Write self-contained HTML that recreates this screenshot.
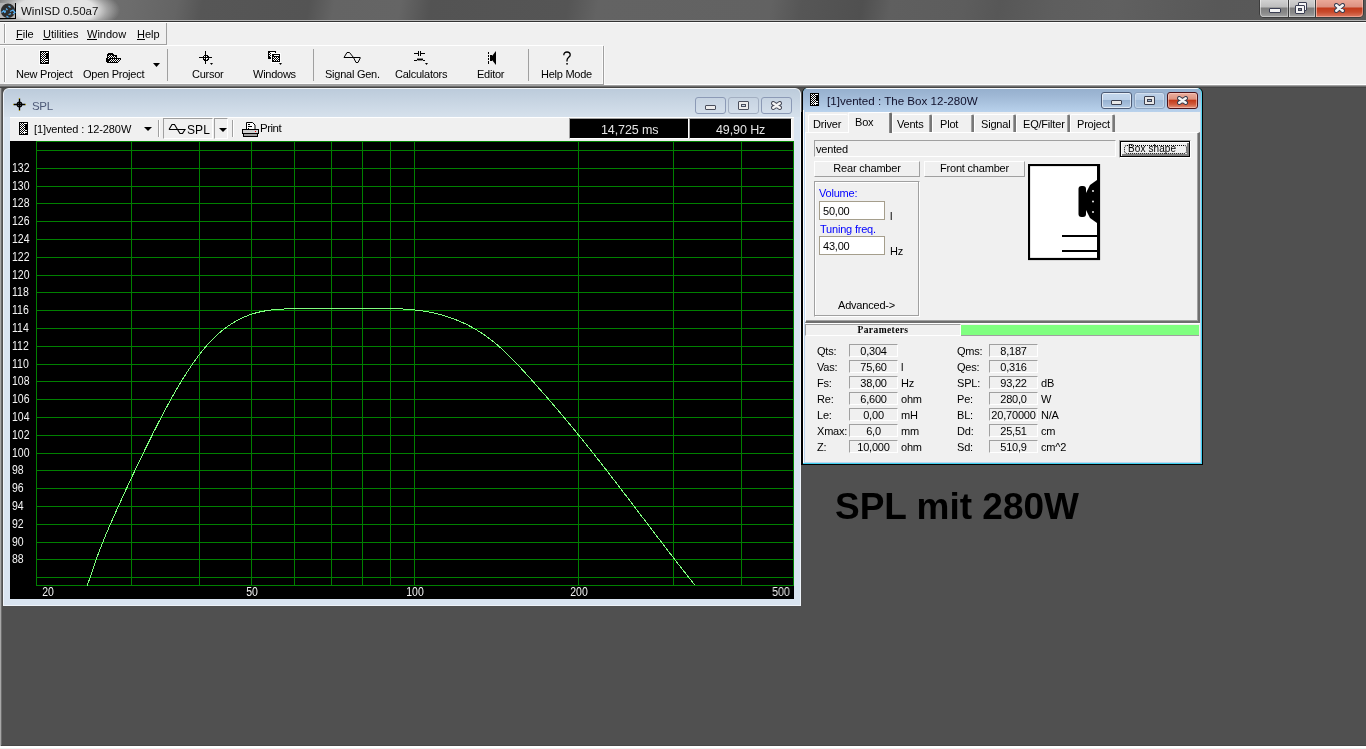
<!DOCTYPE html>
<html><head><meta charset="utf-8">
<style>
*{margin:0;padding:0;box-sizing:border-box}
html,body{width:1366px;height:749px;overflow:hidden;background:#505050;-webkit-font-smoothing:antialiased;font-family:"Liberation Sans",sans-serif;font-size:11px;color:#000}
.a{position:absolute}
.t{position:absolute;line-height:12px;white-space:nowrap}
.lab{font-size:12.5px;color:#f4f4f4;transform:scaleX(0.84);transform-origin:0 0}
.labc{transform-origin:30px 0}
.tab{top:114px;height:18px;border-top:1px solid #fff;border-left:1px solid #fff;border-right:2px solid #787878;box-shadow:inset -1px 0 0 #a0a0a0;border-radius:2px 2px 0 0}
.tt{font-size:11px;letter-spacing:-0.2px}
.btn{border:1px solid #fff;border-right-color:#a0a0a0;border-bottom-color:#a0a0a0}
.pbox{width:49px;height:13px;border:1px solid #a0a0a0;border-right-color:#fff;border-bottom-color:#fff}
u{text-decoration:none;border-bottom:1px solid #000;display:inline-block;line-height:10px}
</style></head><body><div style="position:absolute;left:0;top:0;width:1366px;height:749px;will-change:transform">

<!-- ===== main title bar ===== -->
<div class="a" id="title" style="left:0;top:0;width:1366px;height:20px;background:linear-gradient(100deg,#7a7a7a 0,#6c6c6c 130px,#646464 175px,#565656 200px,#545454 305px,#646464 330px,#656565 395px,#535353 425px,#555 560px,#636363 590px,#626262 760px,#565656 790px,#505050 850px,#5f5f5f 878px,#5d5d5d 950px,#575757 985px,#5e5e5e 1040px,#606060 1100px,#585858 1200px,#5a5a5a 1366px)"></div>
<div class="a" style="left:0;top:0;width:200px;height:20px;background:radial-gradient(ellipse 64px 24px at 56px 10px,rgba(236,236,236,1) 0,rgba(226,226,226,1) 62%,rgba(200,200,200,0.6) 80%,rgba(150,150,150,0) 100%)"></div>
<svg class="a" style="left:0;top:3px" width="17" height="16" viewBox="0 0 17 16">
<rect width="16" height="15.5" fill="#b4b4b4"/><rect x="15" y="0" width="1" height="16" fill="#000"/><rect x="0" y="15" width="16" height="1" fill="#000"/>
<circle cx="8" cy="7.8" r="7.2" fill="#2e2e2e"/>
<path d="M1.5 9.5l2-1.5M3.5 7l1.5 3M6 5.5l1.5 1.5M8.5 3l2 1.5 M10 8.5l3-1.5 2 2.5-2 1.5M8.5 11.5l2.5-.8M6.5 13l2 1.5M5 9.5l.5-2" stroke="#5ab0f0" stroke-width="1.3" fill="none"/>
</svg>
<div class="t" style="left:21px;top:5px;font-size:11.5px;color:#101010">WinISD 0.50a7</div>
<div class="a" style="left:0;top:20px;width:1366px;height:1px;background:#b8b8b8"></div>
<div class="a" style="left:0;top:21px;width:1366px;height:1px;background:#333"></div>
<div class="a" style="left:0;top:22px;width:1366px;height:1px;background:#fff"></div>

<!-- caption buttons -->
<div class="a" style="left:1259px;top:-3px;width:105px;height:21px;border:1px solid #3c3c3c;border-radius:0 0 5px 5px;background:#3c3c3c"></div>
<div class="a" style="left:1260px;top:0;width:28px;height:17px;border-radius:0 0 0 4px;background:linear-gradient(#d2d2d2 0,#bdbdbd 7px,#7e7e7e 8px,#8a8a8a 13px,#a4a4a4 17px);box-shadow:inset 1px 0 0 rgba(255,255,255,.5),inset -1px -1px 0 rgba(255,255,255,.35)"></div>
<div class="a" style="left:1289px;top:0;width:26px;height:17px;background:linear-gradient(#d2d2d2 0,#bdbdbd 7px,#7e7e7e 8px,#8a8a8a 13px,#a4a4a4 17px);box-shadow:inset 1px 0 0 rgba(255,255,255,.5),inset -1px -1px 0 rgba(255,255,255,.35)"></div>
<div class="a" style="left:1316px;top:0;width:47px;height:17px;border-radius:0 0 4px 0;background:linear-gradient(#eaa898 0,#dc9080 7px,#c23a1c 8px,#c84a2c 12px,#dc7a62 17px);box-shadow:inset 1px 0 0 rgba(255,220,210,.6),inset -1px -1px 0 rgba(255,200,190,.5)"></div>
<div class="a" style="left:1269px;top:8px;width:12px;height:5px;background:#f4f4f4;border:1px solid #3a3e52;border-radius:1px"></div>
<div class="a" style="left:1298px;top:2px;width:9px;height:9px;background:#f4f4f4;border:1px solid #3a3e52;border-radius:1px"></div>
<div class="a" style="left:1295px;top:5px;width:10px;height:9px;background:#f4f4f4;border:1px solid #3a3e52;border-radius:1px"></div>
<div class="a" style="left:1298px;top:8px;width:4px;height:3px;background:#8a8a8a;border:1px solid #3a3e52"></div>
<svg class="a" style="left:1334px;top:3px" width="11" height="10" viewBox="0 0 11 10"><path d="M2.3 2.3L8.7 7.7M8.7 2.3L2.3 7.7" stroke="#3a3e52" stroke-width="4.6" stroke-linecap="round"/><path d="M2.3 2.3L8.7 7.7M8.7 2.3L2.3 7.7" stroke="#f4f4f4" stroke-width="2.6" stroke-linecap="round"/></svg>

<!-- ===== rebar ===== -->
<div class="a" style="left:0;top:23px;width:1366px;height:61px;background:#f0f0f0"></div>
<!-- menu band -->
<div class="a" style="left:0;top:23px;width:167px;height:22px;border-right:1px solid #a0a0a0;border-bottom:1px solid #a0a0a0"></div>
<div class="a" style="left:0;top:45px;width:603px;height:1px;background:#fff"></div>
<div class="a" style="left:4px;top:24px;width:2px;height:19px;border-left:1px solid #a0a0a0;border-right:1px solid #fff"></div>
<div class="t" style="left:16px;top:28px"><u>F</u>ile</div>
<div class="t" style="left:43px;top:28px"><u>U</u>tilities</div>
<div class="t" style="left:87px;top:28px"><u>W</u>indow</div>
<div class="t" style="left:137px;top:28px"><u>H</u>elp</div>

<!-- toolbar band -->
<div class="a" style="left:603px;top:46px;width:1px;height:38px;background:#a0a0a0"></div>
<div class="a" style="left:4px;top:48px;width:2px;height:34px;border-left:1px solid #a0a0a0;border-right:1px solid #fff"></div>
<div class="a" style="left:167px;top:49px;width:1px;height:32px;background:#a0a0a0"></div>
<div class="a" style="left:313px;top:49px;width:1px;height:32px;background:#a0a0a0"></div>
<div class="a" style="left:528px;top:49px;width:1px;height:32px;background:#a0a0a0"></div>

<div class="t" style="left:16px;top:68px;letter-spacing:-0.25px">New Project</div>
<div class="t" style="left:83px;top:68px;letter-spacing:-0.25px">Open Project</div>
<div class="t" style="left:192px;top:68px;letter-spacing:-0.25px">Cursor</div>
<div class="t" style="left:253px;top:68px;letter-spacing:-0.25px">Windows</div>
<div class="t" style="left:325px;top:68px;letter-spacing:-0.25px">Signal Gen.</div>
<div class="t" style="left:395px;top:68px;letter-spacing:-0.25px">Calculators</div>
<div class="t" style="left:477px;top:68px;letter-spacing:-0.25px">Editor</div>
<div class="t" style="left:541px;top:68px;letter-spacing:-0.25px">Help Mode</div>

<!-- toolbar icons -->
<svg class="a" style="left:0;top:46px" width="604" height="22" viewBox="0 46 604 22" shape-rendering="crispEdges">
<defs><pattern id="dith" width="2" height="2" patternUnits="userSpaceOnUse"><rect width="1" height="1" fill="#fff"/><rect x="1" y="1" width="1" height="1" fill="#fff"/></pattern></defs>
<!-- new project -->
<rect x="39" y="50" width="11" height="15" fill="#fff"/>
<rect x="40" y="51" width="9" height="13" fill="#000"/>
<rect x="41" y="52" width="5" height="11" fill="url(#dith)"/>
<rect x="46" y="52" width="2" height="1" fill="#fff"/><rect x="46" y="59" width="2" height="1" fill="#fff"/><rect x="45" y="61" width="3" height="1" fill="#fff"/>
<!-- open project folder -->
<path d="M107 54h1v-1h5v1h1v1h3v3h4v1l-1 1l-1 1l-1 1l-1 1h-10v-1h-1z" fill="#000"/>
<path d="M108 55h5v1h3v2h-6v1h-1v1h-1z" fill="url(#dith)"/>
<path d="M111 59h9v1h-1v1h-1v1h-9v-1h1v-1h1z" fill="url(#dith)"/>
<path d="M153 63h7l-3.5 4z" fill="#000" shape-rendering="auto"/>
<!-- cursor -->
<rect x="199" y="57" width="13" height="1" fill="#000"/>
<rect x="205" y="51" width="1" height="13" fill="#000"/>
<path d="M204 55h3v1h1v3h-1v1h-3v-1h-1v-3h1z" fill="none" stroke="#000"/>
<rect x="204" y="56" width="3" height="3" fill="#000"/><rect x="204" y="56" width="1" height="1" fill="#fff"/><rect x="206" y="56" width="1" height="1" fill="#fff"/><rect x="204" y="58" width="1" height="1" fill="#fff"/><rect x="206" y="58" width="1" height="1" fill="#fff"/>
<path d="M210 63h3l-1.5 2z" fill="#000" shape-rendering="auto"/>
<!-- windows -->
<rect x="268" y="51" width="8" height="8" fill="#000"/>
<rect x="269" y="53" width="3" height="4" fill="url(#dith)"/><rect x="270" y="52" width="5" height="1" fill="#fff"/>
<rect x="271" y="53" width="10" height="10" fill="#fff"/>
<rect x="272" y="54" width="8" height="8" fill="#000"/>
<rect x="273" y="57" width="6" height="4" fill="url(#dith)"/><rect x="274" y="55" width="5" height="1" fill="#fff"/>
<path d="M279 63h3l-1.5 2z" fill="#000" shape-rendering="auto"/>
<!-- signal gen -->
<path d="M344 57.5h16M344 57.5l3-5h2.5l4 5l2.5 5h2l2.5-5" fill="none" stroke="#000" stroke-width="1" shape-rendering="auto"/>
<!-- calculators -->
<rect x="414" y="53" width="4" height="1" fill="#000"/><rect x="418" y="51" width="1" height="5" fill="#000"/><rect x="420" y="51" width="1" height="5" fill="#000"/><rect x="421" y="53" width="4" height="1" fill="#000"/>
<path d="M414 60.5h3l1-2 1 2 1-2 1 2 1-2 1 2h2" fill="none" stroke="#000" stroke-width="1" shape-rendering="auto"/>
<path d="M425 63h3l-1.5 2z" fill="#000" shape-rendering="auto"/>
<!-- editor speaker -->
<rect x="488" y="52" width="1" height="2" fill="#000"/><rect x="488" y="55" width="1" height="2" fill="#000"/><rect x="488" y="58" width="1" height="2" fill="#000"/><rect x="488" y="61" width="1" height="3" fill="#000"/>
<rect x="490" y="55" width="2" height="6" fill="#000"/>
<path d="M492 56l4-5v14l-4-5z" fill="#000" shape-rendering="auto"/>
</svg>
<svg class="a" style="left:562px;top:51px" width="10" height="15" viewBox="0 0 10 15"><path d="M1.8 4.2C1.8 2 3.2 1 5 1s3.2 1.1 3.2 3c0 2.2-3.2 2.6-3.2 5.2v1.2" fill="none" stroke="#000" stroke-width="1.3"/><rect x="4.3" y="12" width="1.5" height="1.6" fill="#000"/></svg>

<!-- gray band under rebar -->
<div class="a" style="left:0;top:84px;width:604px;height:1px;background:#a0a0a0"></div>
<div class="a" style="left:604px;top:84px;width:762px;height:1px;background:#fff"></div>
<div class="a" style="left:0;top:85px;width:1366px;height:1px;background:#a0a0a0"></div>
<div class="a" style="left:0;top:86px;width:1366px;height:1px;background:#6e6e6e"></div>
<div class="a" style="left:0;top:87px;width:1366px;height:1px;background:#454545"></div>
<div class="a" style="left:602px;top:46px;width:1px;height:38px;background:#fafafa"></div>
<div class="a" style="left:604px;top:46px;width:1px;height:38px;background:#fafafa"></div>
<div class="a" style="left:4px;top:83px;width:598px;height:1px;background:#fafafa"></div>
<div class="a" style="left:0;top:88px;width:1px;height:659px;background:#a8a8a8"></div>
<div class="a" style="left:1px;top:88px;width:1px;height:657px;background:#6c6c6c"></div>
<div class="a" style="left:1px;top:745px;width:1365px;height:1px;background:#474747"></div>
<div class="a" style="left:0;top:746px;width:1366px;height:2px;background:#fff"></div>
<div class="a" style="left:0;top:748px;width:1366px;height:1px;background:#f0f0f0"></div>

<!-- ===== SPL window ===== -->
<div class="a" style="left:3px;top:88px;width:798px;height:518px;border-radius:6px 6px 0 0;background:#d9e4f0;border:1px solid #eef3f9;border-top-color:#f2f6fa"></div>
<div class="a" style="left:4px;top:89px;width:796px;height:28px;border-radius:5px 5px 0 0;background:linear-gradient(#bccbdb,#d6e1ec)"></div>
<!-- crosshair icon -->
<svg class="a" style="left:12px;top:97px" width="16" height="16" viewBox="0 0 16 16">
<path d="M1.5 7.5h12M7.5 1.5v12" stroke="#000" stroke-width="1.3"/>
<circle cx="7.5" cy="7.5" r="2.2" fill="none" stroke="#000" stroke-width="1.4"/>
<circle cx="1.5" cy="7.5" r=".6" fill="#b8a000"/><circle cx="13.5" cy="7.5" r=".6" fill="#b8a000"/><circle cx="7.5" cy="1.5" r=".6" fill="#b8a000"/><circle cx="7.5" cy="13.5" r=".6" fill="#b8a000"/>
</svg>
<div class="t" style="left:32px;top:100px;font-size:11.5px;letter-spacing:-0.3px;color:#4e5a78">SPL</div>
<!-- caption btns (inactive) -->
<div class="a" style="left:695px;top:97px;width:31px;height:17px;border:1px solid #8c9ab6;border-radius:3px;background:linear-gradient(#c6d3e1,#d3deea)"></div>
<div class="a" style="left:705px;top:105px;width:11px;height:5px;background:#ececec;border:1px solid #4a4e5c;border-radius:1px"></div>
<div class="a" style="left:728px;top:97px;width:31px;height:17px;border:1px solid #a3afc2;border-radius:3px;background:linear-gradient(#c6d3e1,#d3deea)"></div>
<div class="a" style="left:738px;top:101px;width:11px;height:9px;background:#ececec;border:1px solid #4a4e5c;border-radius:1px"></div>
<div class="a" style="left:741px;top:104px;width:5px;height:3px;border:1px solid #4a4e5c;background:#cdd8e5"></div>
<div class="a" style="left:761px;top:97px;width:31px;height:17px;border:1px solid #8c9ab6;border-radius:3px;background:linear-gradient(#c6d3e1,#d3deea)"></div>
<svg class="a" style="left:771px;top:101px" width="11" height="9" viewBox="0 0 11 9"><path d="M2.3 2.3L8.7 6.7M8.7 2.3L2.3 6.7" stroke="#4a4e5c" stroke-width="4.6" stroke-linecap="round"/><path d="M2.3 2.3L8.7 6.7M8.7 2.3L2.3 6.7" stroke="#f4f4f4" stroke-width="2.6" stroke-linecap="round"/></svg>

<!-- toolbar -->
<div class="a" style="left:10px;top:117px;width:784px;height:24px;background:#f0f0f0;border-top:1px solid #fff"></div>
<svg class="a" style="left:19px;top:122px" width="9" height="13" viewBox="0 0 9 13" shape-rendering="crispEdges"><defs><pattern id="d19" width="2" height="2" patternUnits="userSpaceOnUse"><rect width="1" height="1" fill="#fff"/><rect x="1" y="1" width="1" height="1" fill="#fff"/></pattern></defs><rect width="9" height="13" fill="#000"/><rect x="1" y="1" width="5" height="11" fill="url(#d19)"/><rect x="6" y="1" width="2" height="1" fill="#fff"/><rect x="6" y="8" width="2" height="1" fill="#fff"/><rect x="5" y="10" width="3" height="1" fill="#fff"/></svg>
<div class="t" style="left:34px;top:123px;font-size:11px;letter-spacing:-0.1px">[1]vented : 12-280W</div>
<svg class="a" style="left:144px;top:127px" width="8" height="4"><path d="M0 0h8l-4 4z" fill="#000"/></svg>
<div class="a" style="left:158px;top:120px;width:2px;height:17px;border-left:1px solid #a0a0a0;border-right:1px solid #fff"></div>
<div class="a" style="left:163px;top:118px;width:50px;height:21px;border:1px solid #a0a0a0;border-right-color:#fff;border-bottom-color:#fff"></div>
<div class="a" style="left:214px;top:118px;width:14px;height:21px;border:1px solid #a0a0a0;border-right-color:#fff;border-bottom-color:#fff"></div>
<svg class="a" style="left:168px;top:123px" width="18" height="12" viewBox="0 0 18 12"><path d="M1 6.5L4 1.5h2.5L9.5 6.5 12 10.5h2.5L17 6.5H1" fill="none" stroke="#000" stroke-width="1.1"/></svg>
<div class="t" style="left:187px;top:124px;font-size:12px;letter-spacing:0.1px">SPL</div>
<svg class="a" style="left:219px;top:128px" width="8" height="4"><path d="M0 0h8l-4 4z" fill="#000"/></svg>
<div class="a" style="left:232px;top:120px;width:2px;height:17px;border-left:1px solid #a0a0a0;border-right:1px solid #fff"></div>
<svg class="a" style="left:242px;top:121px" width="17" height="16" viewBox="0 0 17 16"><path d="M4.5 1.5h6l2.5 2.5v5h-8.5z" fill="#fff" stroke="#000"/><path d="M6 3.5h2M6 5.5h4M6 7.5h1" stroke="#000"/><rect x=".5" y="8.5" width="16" height="4" fill="#d0d0d0" stroke="#000"/><rect x="1.5" y="12.5" width="14" height="3" fill="#a0a0a0" stroke="#000"/><rect x="13" y="10" width="1" height="1" fill="#f00"/></svg>
<div class="t" style="left:260px;top:122px;font-size:11.5px;letter-spacing:-0.5px">Print</div>
<!-- status boxes -->
<div class="a" style="left:569px;top:118px;width:120px;height:21px;background:#000;border:1px solid #a0a0a0;border-right-color:#fff;border-bottom-color:#fff"></div>
<div class="a" style="left:689px;top:118px;width:103px;height:21px;background:#000;border:1px solid #a0a0a0;border-right-color:#fff;border-bottom-color:#fff"></div>
<div class="t" style="left:601px;top:124px;font-size:12.5px;color:#e4e4e4;letter-spacing:-0.1px">14,725 ms</div>
<div class="t" style="left:716px;top:124px;font-size:12.5px;color:#e4e4e4;letter-spacing:-0.1px">49,90 Hz</div>

<!-- chart -->
<div class="a" style="left:10px;top:141px;width:784px;height:458px;background:#000"></div>
<svg class="a" style="left:0;top:0" width="1366" height="749" viewBox="0 0 1366 749"><path fill="#008000" shape-rendering="crispEdges" d="M36 150h758v1h-758z M36 168h758v1h-758z M36 186h758v1h-758z M36 203h758v1h-758z M36 221h758v1h-758z M36 239h758v1h-758z M36 257h758v1h-758z M36 275h758v1h-758z M36 292h758v1h-758z M36 310h758v1h-758z M36 328h758v1h-758z M36 346h758v1h-758z M36 364h758v1h-758z M36 381h758v1h-758z M36 399h758v1h-758z M36 417h758v1h-758z M36 435h758v1h-758z M36 453h758v1h-758z M36 470h758v1h-758z M36 488h758v1h-758z M36 506h758v1h-758z M36 524h758v1h-758z M36 542h758v1h-758z M36 559h758v1h-758z M36 577h758v1h-758z M36 141h758v1h-758z M36 585h758v1h-758z M131 141h1v445h-1z M199 141h1v445h-1z M251 141h1v445h-1z M294 141h1v445h-1z M331 141h1v445h-1z M362 141h1v445h-1z M390 141h1v445h-1z M414 141h1v445h-1z M578 141h1v445h-1z M673 141h1v445h-1z M741 141h1v445h-1z M36 141h1v445h-1z M793 141h1v445h-1z"/><path fill="none" stroke="#80ff80" stroke-width="1" shape-rendering="crispEdges" d="M87.0,586.09 L88.0,583.41 L89.0,580.63 L90.0,577.77 L91.0,574.85 L92.0,571.89 L93.0,568.91 L94.0,565.95 L95.0,563.00 L96.0,560.12 L97.0,557.29 L98.0,554.54 L99.0,551.85 L100.0,549.22 L101.0,546.64 L102.0,544.11 L103.0,541.63 L104.0,539.19 L105.0,536.79 L106.0,534.41 L107.0,532.07 L108.0,529.75 L109.0,527.44 L110.0,525.15 L111.0,522.87 L112.0,520.60 L113.0,518.33 L114.0,516.07 L115.0,513.82 L116.0,511.58 L117.0,509.35 L118.0,507.12 L119.0,504.90 L120.0,502.69 L121.0,500.49 L122.0,498.29 L123.0,496.10 L124.0,493.92 L125.0,491.75 L126.0,489.58 L127.0,487.42 L128.0,485.26 L129.0,483.11 L130.0,480.97 L131.0,478.84 L132.0,476.71 L133.0,474.59 L134.0,472.47 L135.0,470.36 L136.0,468.26 L137.0,466.16 L138.0,464.07 L139.0,461.99 L140.0,459.91 L141.0,457.83 L142.0,455.77 L143.0,453.70 L144.0,451.65 L145.0,449.59 L146.0,447.55 L147.0,445.51 L148.0,443.48 L149.0,441.45 L150.0,439.43 L151.0,437.42 L152.0,435.41 L153.0,433.41 L154.0,431.43 L155.0,429.44 L156.0,427.47 L157.0,425.51 L158.0,423.56 L159.0,421.61 L160.0,419.68 L161.0,417.75 L162.0,415.84 L163.0,413.94 L164.0,412.05 L165.0,410.17 L166.0,408.30 L167.0,406.44 L168.0,404.60 L169.0,402.76 L170.0,400.94 L171.0,399.14 L172.0,397.34 L173.0,395.56 L174.0,393.80 L175.0,392.05 L176.0,390.31 L177.0,388.59 L178.0,386.88 L179.0,385.19 L180.0,383.51 L181.0,381.85 L182.0,380.21 L183.0,378.58 L184.0,376.97 L185.0,375.38 L186.0,373.80 L187.0,372.24 L188.0,370.70 L189.0,369.18 L190.0,367.67 L191.0,366.19 L192.0,364.72 L193.0,363.28 L194.0,361.85 L195.0,360.44 L196.0,359.06 L197.0,357.69 L198.0,356.34 L199.0,355.02 L200.0,353.72 L201.0,352.43 L202.0,351.18 L203.0,349.94 L204.0,348.72 L205.0,347.53 L206.0,346.36 L207.0,345.22 L208.0,344.10 L209.0,343.00 L210.0,341.92 L211.0,340.87 L212.0,339.84 L213.0,338.83 L214.0,337.84 L215.0,336.88 L216.0,335.93 L217.0,335.01 L218.0,334.11 L219.0,333.23 L220.0,332.37 L221.0,331.52 L222.0,330.70 L223.0,329.90 L224.0,329.12 L225.0,328.35 L226.0,327.60 L227.0,326.88 L228.0,326.17 L229.0,325.48 L230.0,324.80 L231.0,324.15 L232.0,323.51 L233.0,322.88 L234.0,322.28 L235.0,321.69 L236.0,321.11 L237.0,320.56 L238.0,320.02 L239.0,319.49 L240.0,318.98 L241.0,318.49 L242.0,318.01 L243.0,317.55 L244.0,317.10 L245.0,316.67 L246.0,316.25 L247.0,315.85 L248.0,315.46 L249.0,315.09 L250.0,314.73 L251.0,314.39 L252.0,314.06 L253.0,313.74 L254.0,313.44 L255.0,313.15 L256.0,312.88 L257.0,312.61 L258.0,312.36 L259.0,312.12 L260.0,311.90 L261.0,311.68 L262.0,311.47 L263.0,311.28 L264.0,311.09 L265.0,310.92 L266.0,310.75 L267.0,310.60 L268.0,310.45 L269.0,310.31 L270.0,310.18 L271.0,310.05 L272.0,309.94 L273.0,309.83 L274.0,309.73 L275.0,309.63 L276.0,309.54 L277.0,309.45 L278.0,309.37 L279.0,309.30 L280.0,309.23 L281.0,309.16 L282.0,309.10 L283.0,309.04 L284.0,308.99 L285.0,308.93 L286.0,308.88 L287.0,308.84 L288.0,308.79 L289.0,308.75 L290.0,308.72 L291.0,308.68 L292.0,308.65 L293.0,308.62 L294.0,308.59 L295.0,308.56 L296.0,308.54 L297.0,308.52 L298.0,308.50 L299.0,308.49 L300.0,308.47 L301.0,308.46 L302.0,308.45 L303.0,308.44 L304.0,308.43 L305.0,308.43 L306.0,308.42 L307.0,308.42 L308.0,308.42 L309.0,308.42 L310.0,308.42 L311.0,308.43 L312.0,308.43 L313.0,308.44 L314.0,308.44 L315.0,308.45 L316.0,308.46 L317.0,308.47 L318.0,308.48 L319.0,308.49 L320.0,308.50 L321.0,308.52 L322.0,308.53 L323.0,308.54 L324.0,308.56 L325.0,308.57 L326.0,308.58 L327.0,308.60 L328.0,308.61 L329.0,308.63 L330.0,308.64 L331.0,308.66 L332.0,308.67 L333.0,308.68 L334.0,308.70 L335.0,308.71 L336.0,308.72 L337.0,308.73 L338.0,308.75 L339.0,308.76 L340.0,308.77 L341.0,308.78 L342.0,308.78 L343.0,308.79 L344.0,308.80 L345.0,308.80 L346.0,308.81 L347.0,308.81 L348.0,308.81 L349.0,308.81 L350.0,308.81 L351.0,308.81 L352.0,308.80 L353.0,308.80 L354.0,308.79 L355.0,308.78 L356.0,308.77 L357.0,308.76 L358.0,308.75 L359.0,308.74 L360.0,308.73 L361.0,308.72 L362.0,308.70 L363.0,308.69 L364.0,308.68 L365.0,308.66 L366.0,308.65 L367.0,308.64 L368.0,308.62 L369.0,308.61 L370.0,308.60 L371.0,308.59 L372.0,308.57 L373.0,308.56 L374.0,308.55 L375.0,308.54 L376.0,308.53 L377.0,308.53 L378.0,308.52 L379.0,308.52 L380.0,308.51 L381.0,308.51 L382.0,308.51 L383.0,308.51 L384.0,308.51 L385.0,308.52 L386.0,308.53 L387.0,308.53 L388.0,308.54 L389.0,308.56 L390.0,308.57 L391.0,308.59 L392.0,308.61 L393.0,308.63 L394.0,308.66 L395.0,308.69 L396.0,308.72 L397.0,308.76 L398.0,308.79 L399.0,308.83 L400.0,308.88 L401.0,308.93 L402.0,308.98 L403.0,309.03 L404.0,309.09 L405.0,309.16 L406.0,309.22 L407.0,309.29 L408.0,309.37 L409.0,309.45 L410.0,309.53 L411.0,309.62 L412.0,309.71 L413.0,309.81 L414.0,309.91 L415.0,310.02 L416.0,310.13 L417.0,310.24 L418.0,310.36 L419.0,310.49 L420.0,310.62 L421.0,310.76 L422.0,310.90 L423.0,311.05 L424.0,311.21 L425.0,311.37 L426.0,311.53 L427.0,311.71 L428.0,311.89 L429.0,312.07 L430.0,312.26 L431.0,312.46 L432.0,312.66 L433.0,312.87 L434.0,313.09 L435.0,313.31 L436.0,313.55 L437.0,313.78 L438.0,314.03 L439.0,314.28 L440.0,314.54 L441.0,314.81 L442.0,315.08 L443.0,315.37 L444.0,315.66 L445.0,315.95 L446.0,316.26 L447.0,316.57 L448.0,316.89 L449.0,317.22 L450.0,317.56 L451.0,317.91 L452.0,318.26 L453.0,318.63 L454.0,319.00 L455.0,319.38 L456.0,319.77 L457.0,320.17 L458.0,320.58 L459.0,321.00 L460.0,321.42 L461.0,321.86 L462.0,322.31 L463.0,322.76 L464.0,323.23 L465.0,323.70 L466.0,324.19 L467.0,324.68 L468.0,325.19 L469.0,325.70 L470.0,326.23 L471.0,326.76 L472.0,327.31 L473.0,327.87 L474.0,328.43 L475.0,329.01 L476.0,329.60 L477.0,330.20 L478.0,330.81 L479.0,331.43 L480.0,332.07 L481.0,332.71 L482.0,333.37 L483.0,334.04 L484.0,334.72 L485.0,335.41 L486.0,336.11 L487.0,336.83 L488.0,337.56 L489.0,338.30 L490.0,339.05 L491.0,339.81 L492.0,340.59 L493.0,341.38 L494.0,342.18 L495.0,343.00 L496.0,343.82 L497.0,344.66 L498.0,345.52 L499.0,346.39 L500.0,347.27 L501.0,348.16 L502.0,349.06 L503.0,349.98 L504.0,350.91 L505.0,351.86 L506.0,352.81 L507.0,353.77 L508.0,354.75 L509.0,355.73 L510.0,356.73 L511.0,357.73 L512.0,358.75 L513.0,359.77 L514.0,360.80 L515.0,361.84 L516.0,362.88 L517.0,363.94 L518.0,365.00 L519.0,366.07 L520.0,367.14 L521.0,368.22 L522.0,369.31 L523.0,370.40 L524.0,371.49 L525.0,372.59 L526.0,373.70 L527.0,374.81 L528.0,375.92 L529.0,377.03 L530.0,378.15 L531.0,379.27 L532.0,380.39 L533.0,381.52 L534.0,382.64 L535.0,383.77 L536.0,384.90 L537.0,386.03 L538.0,387.16 L539.0,388.30 L540.0,389.43 L541.0,390.57 L542.0,391.71 L543.0,392.85 L544.0,394.00 L545.0,395.14 L546.0,396.29 L547.0,397.44 L548.0,398.59 L549.0,399.75 L550.0,400.90 L551.0,402.06 L552.0,403.22 L553.0,404.38 L554.0,405.55 L555.0,406.72 L556.0,407.89 L557.0,409.06 L558.0,410.24 L559.0,411.42 L560.0,412.60 L561.0,413.78 L562.0,414.97 L563.0,416.16 L564.0,417.35 L565.0,418.54 L566.0,419.74 L567.0,420.94 L568.0,422.14 L569.0,423.35 L570.0,424.56 L571.0,425.77 L572.0,426.98 L573.0,428.20 L574.0,429.42 L575.0,430.64 L576.0,431.86 L577.0,433.09 L578.0,434.32 L579.0,435.55 L580.0,436.79 L581.0,438.02 L582.0,439.26 L583.0,440.50 L584.0,441.75 L585.0,442.99 L586.0,444.24 L587.0,445.49 L588.0,446.74 L589.0,448.00 L590.0,449.25 L591.0,450.51 L592.0,451.77 L593.0,453.03 L594.0,454.30 L595.0,455.57 L596.0,456.83 L597.0,458.11 L598.0,459.38 L599.0,460.65 L600.0,461.93 L601.0,463.21 L602.0,464.49 L603.0,465.77 L604.0,467.05 L605.0,468.34 L606.0,469.62 L607.0,470.91 L608.0,472.20 L609.0,473.49 L610.0,474.78 L611.0,476.08 L612.0,477.37 L613.0,478.67 L614.0,479.97 L615.0,481.27 L616.0,482.57 L617.0,483.87 L618.0,485.18 L619.0,486.48 L620.0,487.79 L621.0,489.09 L622.0,490.40 L623.0,491.71 L624.0,493.02 L625.0,494.33 L626.0,495.64 L627.0,496.95 L628.0,498.26 L629.0,499.57 L630.0,500.89 L631.0,502.20 L632.0,503.51 L633.0,504.83 L634.0,506.14 L635.0,507.46 L636.0,508.77 L637.0,510.09 L638.0,511.41 L639.0,512.72 L640.0,514.04 L641.0,515.36 L642.0,516.67 L643.0,517.99 L644.0,519.31 L645.0,520.62 L646.0,521.94 L647.0,523.25 L648.0,524.57 L649.0,525.88 L650.0,527.20 L651.0,528.51 L652.0,529.83 L653.0,531.14 L654.0,532.45 L655.0,533.77 L656.0,535.08 L657.0,536.39 L658.0,537.70 L659.0,539.01 L660.0,540.32 L661.0,541.63 L662.0,542.93 L663.0,544.24 L664.0,545.54 L665.0,546.85 L666.0,548.15 L667.0,549.45 L668.0,550.75 L669.0,552.05 L670.0,553.35 L671.0,554.65 L672.0,555.94 L673.0,557.24 L674.0,558.53 L675.0,559.82 L676.0,561.11 L677.0,562.40 L678.0,563.68 L679.0,564.97 L680.0,566.25 L681.0,567.53 L682.0,568.81 L683.0,570.09 L684.0,571.36 L685.0,572.64 L686.0,573.91 L687.0,575.18 L688.0,576.44 L689.0,577.71 L690.0,578.97 L691.0,580.23 L692.0,581.49 L693.0,582.74 L694.0,584.00 L695.0,585.25 L695.2,585.50"/></svg>
<div class="t lab" style="left:12px;top:162px">132</div>
<div class="t lab" style="left:12px;top:180px">130</div>
<div class="t lab" style="left:12px;top:197px">128</div>
<div class="t lab" style="left:12px;top:215px">126</div>
<div class="t lab" style="left:12px;top:233px">124</div>
<div class="t lab" style="left:12px;top:251px">122</div>
<div class="t lab" style="left:12px;top:269px">120</div>
<div class="t lab" style="left:12px;top:286px">118</div>
<div class="t lab" style="left:12px;top:304px">116</div>
<div class="t lab" style="left:12px;top:322px">114</div>
<div class="t lab" style="left:12px;top:340px">112</div>
<div class="t lab" style="left:12px;top:358px">110</div>
<div class="t lab" style="left:12px;top:375px">108</div>
<div class="t lab" style="left:12px;top:393px">106</div>
<div class="t lab" style="left:12px;top:411px">104</div>
<div class="t lab" style="left:12px;top:429px">102</div>
<div class="t lab" style="left:12px;top:447px">100</div>
<div class="t lab" style="left:12px;top:464px">98</div>
<div class="t lab" style="left:12px;top:482px">96</div>
<div class="t lab" style="left:12px;top:500px">94</div>
<div class="t lab" style="left:12px;top:518px">92</div>
<div class="t lab" style="left:12px;top:536px">90</div>
<div class="t lab" style="left:12px;top:553px">88</div>
<div class="t lab labc" style="left:17.5px;top:586px;width:60px;text-align:center">20</div>
<div class="t lab labc" style="left:221.5px;top:586px;width:60px;text-align:center">50</div>
<div class="t lab labc" style="left:384.5px;top:586px;width:60px;text-align:center">100</div>
<div class="t lab labc" style="left:548.5px;top:586px;width:60px;text-align:center">200</div>
<div class="t lab labc" style="left:750.5px;top:586px;width:60px;text-align:center">500</div>

<!-- ===== Box window ===== -->
<div class="a" style="left:801px;top:112px;width:2px;height:353px;background:#000"></div>
<div class="a" style="left:802px;top:88px;width:401px;height:377px;border-radius:5px 5px 0 0;background:#000"></div>
<div class="a" style="left:803px;top:88px;width:399px;height:376px;border-radius:5px 5px 0 0;background:linear-gradient(#5ad8f0,#40d0f0);"></div>
<div class="a" style="left:803px;top:88px;width:398px;height:375px;border-radius:5px 5px 0 0;background:linear-gradient(#fafcfe 0,#fafcfe 1px,#96b0ce 1px,#9fb8d5 8px,#b2cbe6 20px,#b9d2ec 24px,#bed5ec 100%);"></div>
<div class="a" style="left:803px;top:110px;width:1px;height:353px;background:#fff"></div>
<div class="a" style="left:805px;top:112px;width:395px;height:350px;background:#f0f0f0"></div>
<!-- icon -->
<svg class="a" style="left:810px;top:93px" width="9" height="13" viewBox="0 0 9 13" shape-rendering="crispEdges"><defs><pattern id="d810" width="2" height="2" patternUnits="userSpaceOnUse"><rect width="1" height="1" fill="#fff"/><rect x="1" y="1" width="1" height="1" fill="#fff"/></pattern></defs><rect width="9" height="13" fill="#000"/><rect x="1" y="1" width="5" height="11" fill="url(#d810)"/><rect x="6" y="1" width="2" height="1" fill="#fff"/><rect x="6" y="8" width="2" height="1" fill="#fff"/><rect x="5" y="10" width="3" height="1" fill="#fff"/></svg>
<div class="t" style="left:827px;top:95px;font-size:11.6px;color:#10102a">[1]vented : The Box 12-280W</div>
<!-- caption buttons active -->
<div class="a" style="left:1101px;top:92px;width:31px;height:17px;border:1px solid #4c5a74;border-radius:3px;background:linear-gradient(#c4d7ec 0,#bcd0e7 45%,#97b2d1 50%,#a8c0dc 80%,#b6cce4 100%);box-shadow:inset 0 0 0 1px rgba(255,255,255,.6)"></div>
<div class="a" style="left:1111px;top:100px;width:11px;height:5px;background:#e8e8e8;border:1px solid #3c4050;border-radius:1px"></div>
<div class="a" style="left:1134px;top:92px;width:31px;height:17px;border:1px solid #8ca2be;border-radius:3px;background:linear-gradient(#bdd1e8 0,#b5cbe4 45%,#a2bcd9 50%,#aec5df 100%);box-shadow:inset 0 0 0 1px rgba(255,255,255,.3)"></div>
<div class="a" style="left:1144px;top:96px;width:11px;height:9px;background:#e8e8e8;border:1px solid #3c4050;border-radius:1px"></div>
<div class="a" style="left:1147px;top:99px;width:5px;height:3px;border:1px solid #3c4050;background:#9cb4d0"></div>
<div class="a" style="left:1167px;top:92px;width:31px;height:17px;border:1px solid #4a1218;border-radius:3px;background:linear-gradient(#eab0a0 0,#de9480 40%,#c43c1c 50%,#cf5a3c 75%,#e2947c 100%);box-shadow:inset 0 0 0 1px rgba(255,210,200,.55)"></div>
<svg class="a" style="left:1177px;top:96px" width="11" height="9" viewBox="0 0 11 9"><path d="M2.3 2.3L8.7 6.7M8.7 2.3L2.3 6.7" stroke="#3a3e4e" stroke-width="4.6" stroke-linecap="round"/><path d="M2.3 2.3L8.7 6.7M8.7 2.3L2.3 6.7" stroke="#f4f4f4" stroke-width="2.6" stroke-linecap="round"/></svg>

<!-- tabs -->
<div class="a" style="left:805px;top:132px;width:395px;height:191px;border-top:1px solid #fff;border-left:1px solid #fff;border-right:2px solid #6e6e6e;border-bottom:2px solid #6e6e6e;box-shadow:inset -1px -1px 0 #a0a0a0"></div>
<div class="a tab" style="left:808px;width:40px;border-right:none;box-shadow:none"></div>
<div class="a tab" style="left:892px;width:40px"></div>
<div class="a tab" style="left:932px;width:42px"></div>
<div class="a tab" style="left:974px;width:42px"></div>
<div class="a tab" style="left:1016px;width:54px"></div>
<div class="a tab" style="left:1070px;width:45px"></div>
<div class="a" style="left:848px;top:112px;width:44px;height:21px;background:#f0f0f0;border-top:1px solid #fff;border-left:1px solid #fff;border-right:2px solid #6e6e6e;box-shadow:inset -1px 0 0 #8a8a8a;border-radius:2px 2px 0 0"></div>
<div class="t tt" style="left:813px;top:118px">Driver</div>
<div class="t tt" style="left:855px;top:116px">Box</div>
<div class="t tt" style="left:897px;top:118px">Vents</div>
<div class="t tt" style="left:940px;top:118px">Plot</div>
<div class="t tt" style="left:981px;top:118px">Signal</div>
<div class="t tt" style="left:1023px;top:118px">EQ/Filter</div>
<div class="t tt" style="left:1077px;top:118px">Project</div>

<!-- box page -->
<div class="a" style="left:814px;top:140px;width:302px;height:17px;border:1px solid #a0a0a0;border-right-color:#fff;border-bottom-color:#fff"></div>
<div class="t tt" style="left:816px;top:143px">vented</div>
<div class="a" style="left:1119px;top:140px;width:72px;height:18px;border:1px solid #a0a0a0;border-right-color:#fff;border-bottom-color:#fff"></div>
<div class="a" style="left:1120px;top:141px;width:70px;height:16px;border:1px solid #000;background:#f0f0f0;box-shadow:inset 1px 1px 0 #fff,inset -2px -2px 0 #808080"></div>
<div class="a" style="left:1124px;top:145px;width:63px;height:9px;border:1px dotted #000;border-radius:3px"></div>
<div class="t" style="left:1128px;top:143px;font-size:10px;line-height:11px;letter-spacing:0.1px;color:#000">Box shape</div>

<div class="a btn" style="left:814px;top:161px;width:106px;height:16px"></div>
<div class="t tt" style="left:814px;top:162px;width:106px;text-align:center">Rear chamber</div>
<div class="a btn" style="left:924px;top:161px;width:101px;height:16px"></div>
<div class="t tt" style="left:924px;top:162px;width:101px;text-align:center">Front chamber</div>

<div class="a" style="left:814px;top:181px;width:106px;height:136px;border:1px solid #a0a0a0;border-right-color:#fff;border-bottom-color:#fff;box-shadow:inset -1px -1px 0 #a0a0a0,inset 1px 1px 0 #fff"></div>
<div class="t tt" style="left:819px;top:187px;color:#0000ff">Volume:</div>
<div class="a" style="left:819px;top:201px;width:66px;height:19px;border:1px solid #a59e8c;background:#fff"></div>
<div class="t tt" style="left:823px;top:205px">50,00</div>
<div class="t tt" style="left:890px;top:210px">l</div>
<div class="t tt" style="left:820px;top:223px;color:#0000ff">Tuning freq.</div>
<div class="a" style="left:819px;top:236px;width:66px;height:19px;border:1px solid #a59e8c;background:#fff"></div>
<div class="t tt" style="left:823px;top:240px">43,00</div>
<div class="t tt" style="left:890px;top:245px">Hz</div>
<div class="t tt" style="left:838px;top:299px">Advanced-&gt;</div>

<!-- box drawing -->
<svg class="a" style="left:1028px;top:164px" width="73" height="97" viewBox="0 0 73 97">
<rect x="1" y="1" width="70" height="94" fill="#fff" stroke="#000" stroke-width="2.2"/>
<rect x="69" y="1" width="3" height="95" fill="#000"/>
<rect x="34" y="71" width="36" height="2" fill="#000"/>
<rect x="34" y="86" width="36" height="2" fill="#000"/>
<rect x="50.5" y="22" width="7.5" height="31" rx="3" fill="#000"/>
<path d="M58 29 L62 21 L69 16 L69 59 L62 54 L58 46 z" fill="#000"/>
<circle cx="65" cy="27" r=".9" fill="#fff"/><circle cx="65" cy="37.5" r=".9" fill="#fff"/><circle cx="65" cy="48" r=".9" fill="#fff"/>
</svg>

<!-- splitter -->
<div class="a" style="left:805px;top:323px;width:395px;height:1px;background:#fff"></div>
<div class="a" style="left:805px;top:324px;width:156px;height:12px;background:#f0f0f0;border-left:1px solid #a0a0a0;border-top:1px solid #a0a0a0;border-right:1px solid #fff;border-bottom:1px solid #fff"></div>
<div class="a" style="left:961px;top:325px;width:238px;height:11px;background:#80ff80;border-bottom:1px solid #a0a0a0"></div>
<div class="t" style="left:805px;top:324px;width:156px;text-align:center;font-family:'Liberation Serif',serif;font-weight:bold;font-size:9.5px;line-height:12px;letter-spacing:0.4px">Parameters</div>

<!-- params -->
<div class="t tt" style="left:817px;top:345px">Qts:</div>
<div class="a pbox" style="left:849px;top:344px"></div>
<div class="t tt" style="left:849px;top:345px;width:49px;text-align:center">0,304</div>
<div class="t tt" style="left:957px;top:345px">Qms:</div>
<div class="a pbox" style="left:989px;top:344px"></div>
<div class="t tt" style="left:989px;top:345px;width:49px;text-align:center">8,187</div>
<div class="t tt" style="left:817px;top:361px">Vas:</div>
<div class="a pbox" style="left:849px;top:360px"></div>
<div class="t tt" style="left:849px;top:361px;width:49px;text-align:center">75,60</div>
<div class="t tt" style="left:901px;top:361px">l</div>
<div class="t tt" style="left:957px;top:361px">Qes:</div>
<div class="a pbox" style="left:989px;top:360px"></div>
<div class="t tt" style="left:989px;top:361px;width:49px;text-align:center">0,316</div>
<div class="t tt" style="left:817px;top:377px">Fs:</div>
<div class="a pbox" style="left:849px;top:376px"></div>
<div class="t tt" style="left:849px;top:377px;width:49px;text-align:center">38,00</div>
<div class="t tt" style="left:901px;top:377px">Hz</div>
<div class="t tt" style="left:957px;top:377px">SPL:</div>
<div class="a pbox" style="left:989px;top:376px"></div>
<div class="t tt" style="left:989px;top:377px;width:49px;text-align:center">93,22</div>
<div class="t tt" style="left:1041px;top:377px">dB</div>
<div class="t tt" style="left:817px;top:393px">Re:</div>
<div class="a pbox" style="left:849px;top:392px"></div>
<div class="t tt" style="left:849px;top:393px;width:49px;text-align:center">6,600</div>
<div class="t tt" style="left:901px;top:393px">ohm</div>
<div class="t tt" style="left:957px;top:393px">Pe:</div>
<div class="a pbox" style="left:989px;top:392px"></div>
<div class="t tt" style="left:989px;top:393px;width:49px;text-align:center">280,0</div>
<div class="t tt" style="left:1041px;top:393px">W</div>
<div class="t tt" style="left:817px;top:409px">Le:</div>
<div class="a pbox" style="left:849px;top:408px"></div>
<div class="t tt" style="left:849px;top:409px;width:49px;text-align:center">0,00</div>
<div class="t tt" style="left:901px;top:409px">mH</div>
<div class="t tt" style="left:957px;top:409px">BL:</div>
<div class="a pbox" style="left:989px;top:408px"></div>
<div class="t tt" style="left:989px;top:409px;width:49px;text-align:center">20,70000</div>
<div class="t tt" style="left:1041px;top:409px">N/A</div>
<div class="t tt" style="left:817px;top:425px">Xmax:</div>
<div class="a pbox" style="left:849px;top:424px"></div>
<div class="t tt" style="left:849px;top:425px;width:49px;text-align:center">6,0</div>
<div class="t tt" style="left:901px;top:425px">mm</div>
<div class="t tt" style="left:957px;top:425px">Dd:</div>
<div class="a pbox" style="left:989px;top:424px"></div>
<div class="t tt" style="left:989px;top:425px;width:49px;text-align:center">25,51</div>
<div class="t tt" style="left:1041px;top:425px">cm</div>
<div class="t tt" style="left:817px;top:441px">Z:</div>
<div class="a pbox" style="left:849px;top:440px"></div>
<div class="t tt" style="left:849px;top:441px;width:49px;text-align:center">10,000</div>
<div class="t tt" style="left:901px;top:441px">ohm</div>
<div class="t tt" style="left:957px;top:441px">Sd:</div>
<div class="a pbox" style="left:989px;top:440px"></div>
<div class="t tt" style="left:989px;top:441px;width:49px;text-align:center">510,9</div>
<div class="t tt" style="left:1041px;top:441px">cm^2</div>

<div class="t" style="left:835px;top:487px;font-size:37px;line-height:40px;font-weight:bold;color:#000">SPL mit 280W</div>

</div></body></html>
